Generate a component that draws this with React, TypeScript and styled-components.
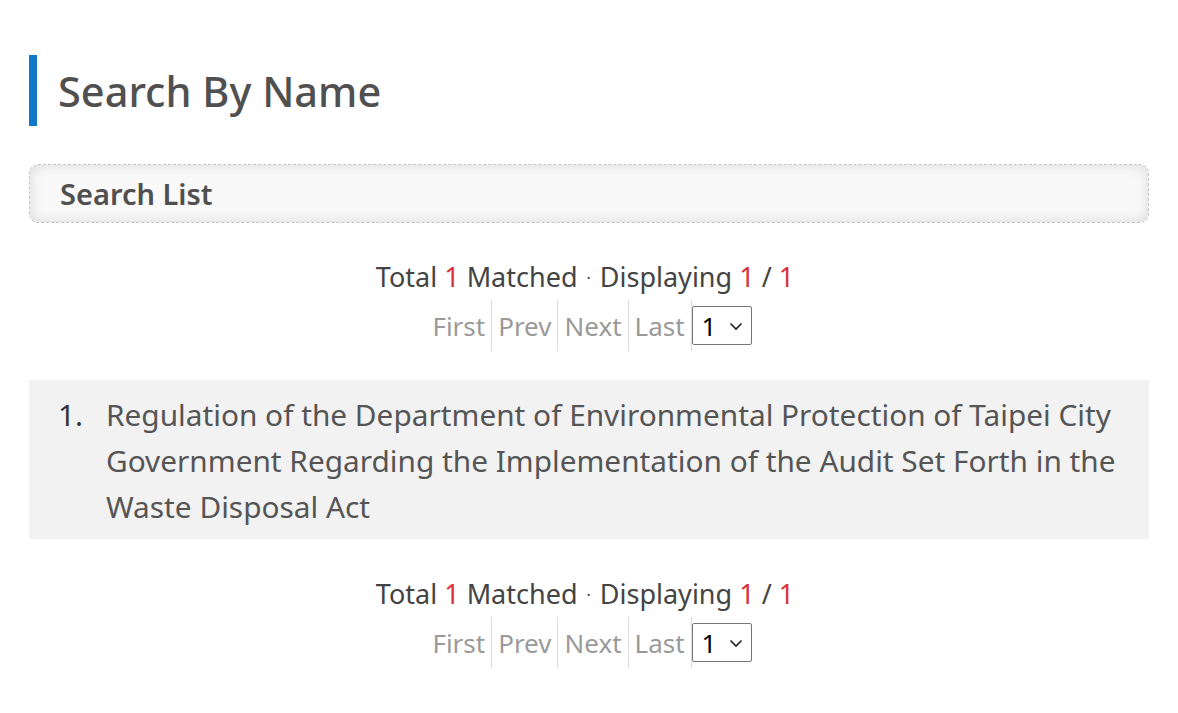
import React from "react";
import styled, { createGlobalStyle } from "styled-components";

const Global = createGlobalStyle`
  body {
    margin: 0;
    background: #fff;
    font-family: "Noto Sans", "Open Sans", sans-serif;
  }
`;

const Page = styled.div`
  width: 1120px;
  padding: 55px 0 40px 29px;
`;

const Title = styled.h1`
  margin: 0;
  height: 71px;
  border-left: 8px solid #1177c8;
  border-radius: 0 4px 4px 0;
  padding-left: 21px;
  display: flex;
  align-items: center;
  font-size: 41.5px;
  font-weight: 500;
  color: #505050;
`;

const SectionBar = styled.div`
  margin-top: 38px;
  height: 57px;
  border: 1px dashed #c4c4c4;
  border-radius: 9px;
  background: #f9f9f9;
  box-shadow: inset 0 0 14px rgba(0, 0, 0, 0.13);
  display: flex;
  align-items: center;
  padding-left: 30px;
  font-size: 29px;
  font-weight: 600;
  color: #505050;
`;

const Summary = styled.div<{ $top: number }>`
  margin-top: ${(p) => p.$top}px;
  padding-right: 8px;
  text-align: center;
  font-size: 27px;
  line-height: 36px;
  color: #444;
`;

const Red = styled.span`
  color: #d9303a;
`;

const Dot = styled.span`
  font-size: 16px;
  margin: 0 9px;
  vertical-align: 3px;
`;

const Pager = styled.div`
  margin-top: 4px;
  height: 51px;
  display: flex;
  justify-content: center;
  align-items: center;
`;

const PageLink = styled.span`
  height: 51px;
  display: flex;
  align-items: center;
  padding: 0 6px;
  font-size: 26px;
  color: #9a9a9a;
  & + & {
    border-left: 1px solid #dcdcdc;
  }
`;

const SelectWrap = styled.div`
  position: relative;
  height: 51px;
  display: flex;
  align-items: center;
  border-left: 1px solid #dcdcdc;
`;

const Select = styled.select`
  appearance: none;
  width: 60px;
  height: 39px;
  border: 1px solid #767676;
  border-radius: 2px;
  background: #fff;
  padding: 0 0 0 9px;
  font-family: "Noto Sans", sans-serif;
  font-size: 26px;
  color: #000;
`;

const Chevron = styled.svg`
  position: absolute;
  right: 9px;
  top: 22px;
  pointer-events: none;
`;

const ResultList = styled.ol`
  list-style: none;
  margin: 29px 0 0;
  padding: 0;
`;

const ResultItem = styled.li`
  background: #f2f2f2;
  padding: 12px 24px 9px 29px;
  display: flex;
  font-size: 29.8px;
  line-height: 46px;
  color: #555;
`;

const Num = styled.span`
  flex: 0 0 48px;
  color: #333;
`;

const Pagination = ({ top }: { top: number }) => (
  <>
    <Summary $top={top}>
      Total <Red>1</Red> Matched<Dot>·</Dot>Displaying <Red>1</Red> / <Red>1</Red>
    </Summary>
    <Pager>
      <PageLink>First</PageLink>
      <PageLink>Prev</PageLink>
      <PageLink>Next</PageLink>
      <PageLink>Last</PageLink>
      <SelectWrap>
        <Select defaultValue="1">
          <option value="1">1</option>
        </Select>
        <Chevron width="14" height="9" viewBox="0 0 14 9">
          <path d="M1.5 1.5l5.5 5.5 5.5-5.5" fill="none" stroke="#222" strokeWidth="1.6" />
        </Chevron>
      </SelectWrap>
    </Pager>
  </>
);

export default function App() {
  return (
    <Page>
      <Global />
      <Title>Search By Name</Title>
      <SectionBar>Search List</SectionBar>
      <Pagination top={36} />
      <ResultList>
        <ResultItem>
          <Num>1.</Num>
          <span>
            Regulation of the Department of Environmental Protection of Taipei City Government
            Regarding the Implementation of the Audit Set Forth in the Waste Disposal Act
          </span>
        </ResultItem>
      </ResultList>
      <Pagination top={37} />
    </Page>
  );
}
